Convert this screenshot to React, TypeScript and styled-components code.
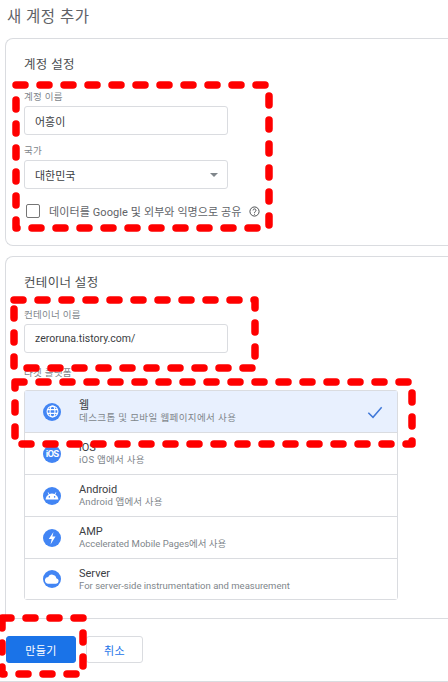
import React from "react";
import styled, { createGlobalStyle } from "styled-components";

const GlobalStyle = createGlobalStyle`
    html, body {
        margin: 0;
        padding: 0;
        background: #fff;
        overflow: hidden;
    }
    body {
        font-family: Roboto, "Noto Sans CJK KR", sans-serif;
        color: #3c4043;
    }
`;

const Page = styled.div`
    position: relative;
    width: 448px;
    height: 682px;
    overflow: hidden;
    box-sizing: border-box;
    border-bottom: 1px solid #dadce0;
`;

const Title = styled.h1`
    margin: 0;
    height: 38px;
    padding: 8px 0 0 7px;
    box-sizing: border-box;
    font-size: 15.5px;
    line-height: 18px;
    font-weight: 400;
    letter-spacing: 0.5px;
    color: #5f6368;
`;

const Card = styled.section<{ $height: number; $open?: boolean }>`
    box-sizing: border-box;
    height: ${({ $height }) => $height}px;
    margin-left: 5px;
    padding: 18px 0 0 18px;
    border: 1px solid #dadce0;
    border-right: none;
    border-bottom: ${({ $open }) => ($open ? "none" : "1px solid #dadce0")};
    border-radius: ${({ $open }) => ($open ? "8px 0 0 0" : "8px 0 0 8px")};
    & + & {
        margin-top: 10px;
    }
`;

const CardTitle = styled.h2`
    margin: 0 0 18px;
    font-size: 12.5px;
    line-height: 16px;
    font-weight: 400;
    letter-spacing: 0.35px;
    color: #4a4d50;
`;

const FieldLabel = styled.label<{ $gap?: number }>`
    display: block;
    height: 12px;
    margin-bottom: ${({ $gap }) => $gap ?? 3}px;
    font-size: 9.5px;
    line-height: 12px;
    letter-spacing: 0.3px;
    color: #80868b;
`;

const Field = styled.div<{ $gap?: number; $size?: number }>`
    box-sizing: border-box;
    display: flex;
    align-items: center;
    justify-content: space-between;
    width: 204px;
    height: 29px;
    margin-bottom: ${({ $gap }) => $gap ?? 10}px;
    padding: 0 9px 0 10px;
    border: 1px solid #dadce0;
    border-radius: 3px;
    font-size: ${({ $size }) => $size ?? 11}px;
    color: #3c4043;
`;

const Caret = styled.span`
    width: 0;
    height: 0;
    border-left: 4px solid transparent;
    border-right: 4px solid transparent;
    border-top: 4px solid #80868b;
`;

const CheckRow = styled.div`
    display: flex;
    align-items: center;
    height: 14px;
    padding-left: 2px;
    font-size: 11px;
    letter-spacing: 0.1px;
    color: #5f6368;
`;

const Checkbox = styled.span`
    box-sizing: border-box;
    flex: none;
    width: 14px;
    height: 14px;
    margin-right: 9px;
    border: 1px solid #757575;
    border-radius: 2px;
`;

const HelpIcon = styled.span`
    display: flex;
    margin-left: 7px;
    color: #3c4043;
`;

const PlatformList = styled.div`
    box-sizing: border-box;
    width: 374px;
    border: 1px solid #dadce0;
    border-radius: 3px;
`;

const PlatformRow = styled.div<{ $selected?: boolean }>`
    box-sizing: border-box;
    display: flex;
    align-items: center;
    height: 42px;
    padding: 0 14px 0 18px;
    background: ${({ $selected }) => ($selected ? "#e8f0fe" : "#fff")};
    &:not(:last-child) {
        border-bottom: 1px solid #dadce0;
    }
    &:last-child {
        height: 40px;
    }
`;

const PlatformIcon = styled.span`
    display: flex;
    align-items: center;
    justify-content: center;
    flex: none;
    width: 18px;
    height: 18px;
    margin-right: 18px;
    border-radius: 50%;
    background: #4285f4;
    color: #fff;
    font-size: 9.5px;
    font-weight: 700;
    letter-spacing: -0.8px;
`;

const PlatformText = styled.div`
    flex: 1;
    min-width: 0;
`;

const PlatformName = styled.div`
    font-size: 11px;
    line-height: 13px;
    color: #3c4043;
`;

const PlatformDesc = styled.div<{ $tracking?: number }>`
    font-size: 9.5px;
    line-height: 12px;
    letter-spacing: ${({ $tracking }) => $tracking ?? 0}px;
    color: #80868b;
`;

const CheckMark = styled.span`
    display: flex;
    color: #3f78d8;
`;

const Footer = styled.footer`
    display: flex;
    gap: 10px;
    padding: 17px 0 0 6px;
    border-top: 1px solid #dadce0;
`;

const Button = styled.button<{ $primary?: boolean }>`
    box-sizing: border-box;
    width: ${({ $primary }) => ($primary ? 70 : 57)}px;
    height: 27px;
    padding: 0;
    border: 1px solid ${({ $primary }) => ($primary ? "#1a73e8" : "#dadce0")};
    border-radius: 3px;
    background: ${({ $primary }) => ($primary ? "#1a73e8" : "#fff")};
    color: ${({ $primary }) => ($primary ? "#fff" : "#1a73e8")};
    font-family: inherit;
    font-size: 11px;
    letter-spacing: 0.3px;
`;

const Annotations = styled.svg`
    position: absolute;
    top: 0;
    left: 0;
    width: 448px;
    height: 682px;
    pointer-events: none;
`;

const Marker = styled.rect`
    fill: none;
    stroke: #ff0000;
    stroke-width: 7.5;
    stroke-linecap: round;
    stroke-linejoin: round;
    stroke-dasharray: 9 15;
`;

const GlobeIcon = () => (
    <svg width="13" height="13" viewBox="0 0 24 24" fill="none" stroke="currentColor" strokeWidth="2">
        <circle cx="12" cy="12" r="10" />
        <ellipse cx="12" cy="12" rx="4.5" ry="10" />
        <path d="M2.500 8.500h19M2.500 15.500h19" />
    </svg>
);

const AndroidIcon = () => (
    <svg width="14" height="14" viewBox="0 0 24 24" fill="currentColor" fillRule="evenodd">
        <path d="M1 18c.4-3.900 2.300-6.900 5.300-8.700L4.500 6.200l1-.6 1.900 3.100C8.800 8 10.300 7.700 12 7.700s3.200.3 4.600 1l1.900-3.100 1 .6-1.800 3.100c3 1.800 4.900 4.800 5.300 8.700H1zM7.500 12.200a1.300 1.300 0 1 0 0 2.600 1.300 1.300 0 0 0 0-2.600zM16.500 12.200a1.300 1.300 0 1 0 0 2.600 1.300 1.300 0 0 0 0-2.600z" />
    </svg>
);

const BoltIcon = () => (
    <svg width="14" height="14" viewBox="0 0 24 24" fill="currentColor">
        <path d="M14.500 1.500 6.500 13.500h5l-2 9.500 8.500-13.500h-5.300l1.800-8z" />
    </svg>
);

const CloudIcon = () => (
    <svg width="14" height="14" viewBox="0 0 24 24" fill="currentColor">
        <path d="M19.400 10.500A7.500 7.500 0 0 0 5.400 8.500 5.700 5.700 0 0 0 6 20h13a4.800 4.800 0 0 0 .4-9.500z" />
    </svg>
);

const platforms = [
    { name: "웹", desc: "데스크톱 및 모바일 웹페이지에서 사용", tracking: 0.4, icon: <GlobeIcon />, selected: true },
    { name: "iOS", desc: "iOS 앱에서 사용", tracking: 0.3, icon: "iOS" },
    { name: "Android", desc: "Android 앱에서 사용", tracking: 0.15, icon: <AndroidIcon /> },
    { name: "AMP", desc: "Accelerated Mobile Pages에서 사용", icon: <BoltIcon /> },
    { name: "Server", desc: "For server-side instrumentation and measurement", icon: <CloudIcon /> },
];

export default function App() {
    return (
        <Page>
            <GlobalStyle />
            <Title>새 계정 추가</Title>
            <Card $height={208}>
                <CardTitle>계정 설정</CardTitle>
                <FieldLabel>계정 이름</FieldLabel>
                <Field>어흥이</Field>
                <FieldLabel>국가</FieldLabel>
                <Field $gap={15}>
                    대한민국
                    <Caret />
                </Field>
                <CheckRow>
                    <Checkbox />
                    데이터를 Google 및 외부와 익명으로 공유
                    <HelpIcon>
                        <svg width="11" height="11" viewBox="0 0 24 24" fill="none" stroke="currentColor" strokeWidth="2">
                            <circle cx="12" cy="12" r="10" />
                            <path d="M8.800 9.500a3.200 3.200 0 1 1 5 2.700c-1.100.8-1.800 1.400-1.800 2.800M12 17v2" />
                        </svg>
                    </HelpIcon>
                </CheckRow>
            </Card>
            <Card $height={362} $open>
                <CardTitle>컨테이너 설정</CardTitle>
                <FieldLabel>컨테이너 이름</FieldLabel>
                <Field $gap={14} $size={10.5}>zeroruna.tistory.com/</Field>
                <FieldLabel $gap={11}>타겟 플랫폼</FieldLabel>
                <PlatformList>
                    {platforms.map((p) => (
                        <PlatformRow key={p.name} $selected={p.selected}>
                            <PlatformIcon>{p.icon}</PlatformIcon>
                            <PlatformText>
                                <PlatformName>{p.name}</PlatformName>
                                <PlatformDesc $tracking={p.tracking}>{p.desc}</PlatformDesc>
                            </PlatformText>
                            {p.selected && (
                                <CheckMark>
                                    <svg width="16" height="16" viewBox="0 0 24 24" fill="none" stroke="currentColor" strokeWidth="2.200">
                                        <path d="M2 13l7 7L22 5" />
                                    </svg>
                                </CheckMark>
                            )}
                        </PlatformRow>
                    ))}
                </PlatformList>
            </Card>
            <Footer>
                <Button $primary>만들기</Button>
                <Button>취소</Button>
            </Footer>
            <Annotations viewBox="0 0 448 682">
                <Marker x="16" y="85" width="253" height="143" />
                <Marker x="14" y="300" width="241" height="68" />
                <Marker x="15" y="382" width="397" height="62" />
                <Marker x="2" y="618" width="81" height="56" />
            </Annotations>
        </Page>
    );
}
